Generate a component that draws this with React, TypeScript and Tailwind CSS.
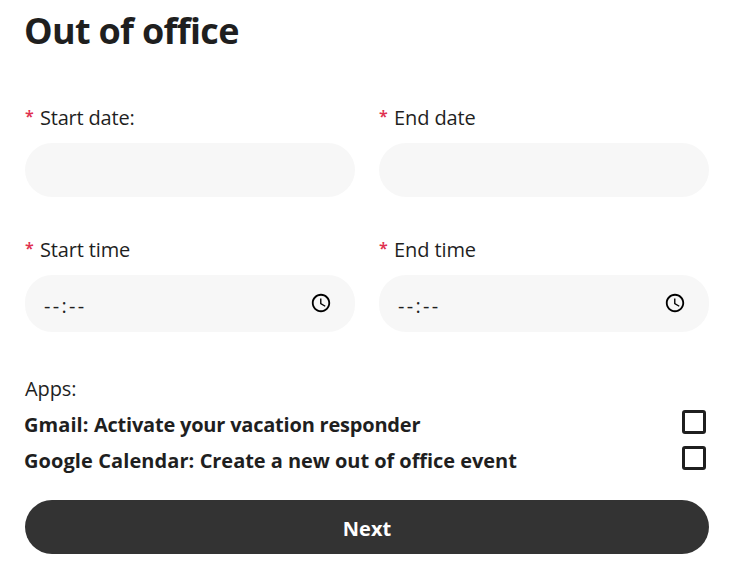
import React from "react";

function ClockIcon() {
  return (
    <svg className="mb-px h-[22px] w-[22px] shrink-0 text-black" viewBox="0 0 24 24" fill="currentColor" aria-hidden="true">
      <path d="M11.99 2C6.47 2 2 6.48 2 12s4.47 10 9.99 10C17.52 22 22 17.52 22 12S17.52 2 11.99 2zM12 20c-4.42 0-8-3.58-8-8s3.58-8 8-8 8 3.58 8 8-3.58 8-8 8z" />
      <path d="M12.5 7H11v6l5.25 3.15.75-1.23-4.5-2.67z" />
    </svg>
  );
}

function Label({ text, className }: { text: string; className: string }) {
  return (
    <div className="flex h-7 text-xl leading-7">
      <span className="w-[15px] shrink-0 font-['Noto_Sans',sans-serif] text-base font-semibold leading-6 text-[#e0314f]">*</span>
      <span className={`whitespace-nowrap ${className}`}>{text}</span>
    </div>
  );
}

function DateField({ label, className }: { label: string; className: string }) {
  return (
    <div>
      <Label text={label} className={className} />
      <div className="mt-[11px] h-[54px] rounded-[27px] bg-[#f7f7f7]" />
    </div>
  );
}

function TimeField({ label, className }: { label: string; className: string }) {
  return (
    <div>
      <Label text={label} className={className} />
      <div className="mt-[11px] flex h-[57px] items-center justify-between rounded-[27px] bg-[#f7f7f7] pl-[19px] pr-[23px]">
        <span className="pt-1 text-xl leading-7 tracking-[2.3px]">--:--</span>
        <ClockIcon />
      </div>
    </div>
  );
}

function AppRow({ name, action, className }: { name: string; action: string; className: string }) {
  return (
    <label className="flex h-9 items-start justify-between pr-[3px]">
      <span className={`-ml-px whitespace-nowrap text-xl font-bold leading-9 ${className}`}>
        <span className="tracking-[0.08px]">{name}: </span>
        {action}
      </span>
      <span className="mt-[3px] h-6 w-6 rounded-[3px] border-[3px] border-[#1f1f1f]" />
    </label>
  );
}

export default function App() {
  return (
    <main className="h-[583px] w-[754px] overflow-hidden bg-white pl-[25px] pr-[45px] font-['Open_Sans','Noto_Sans',sans-serif] text-[#1f1f1f]">
      <h1 className="-ml-px pt-2 text-[36px] font-bold leading-[46px] tracking-[-0.7px]">Out of office</h1>
      <div className="mt-[50px] grid grid-cols-2 gap-x-6">
        <DateField label="Start date:" className="tracking-[-0.2px]" />
        <DateField label="End date" className="tracking-[-0.1px]" />
      </div>
      <div className="mt-[39px] grid grid-cols-2 gap-x-6">
        <TimeField label="Start time" className="tracking-[-0.15px]" />
        <TimeField label="End time" className="tracking-[-0.1px]" />
      </div>
      <p className="mt-[43px] h-8 text-xl leading-7 tracking-[-0.1px]">Apps:</p>
      <AppRow name="Gmail" action="Activate your vacation responder" className="tracking-[-0.21px]" />
      <AppRow name="Google Calendar" action="Create a new out of office event" className="tracking-[-0.05px]" />
      <button className="mt-[21px] flex h-[54px] w-full items-center justify-center rounded-full bg-[#333333] pt-[3px] text-xl font-bold leading-7 text-white">
        Next
      </button>
    </main>
  );
}
